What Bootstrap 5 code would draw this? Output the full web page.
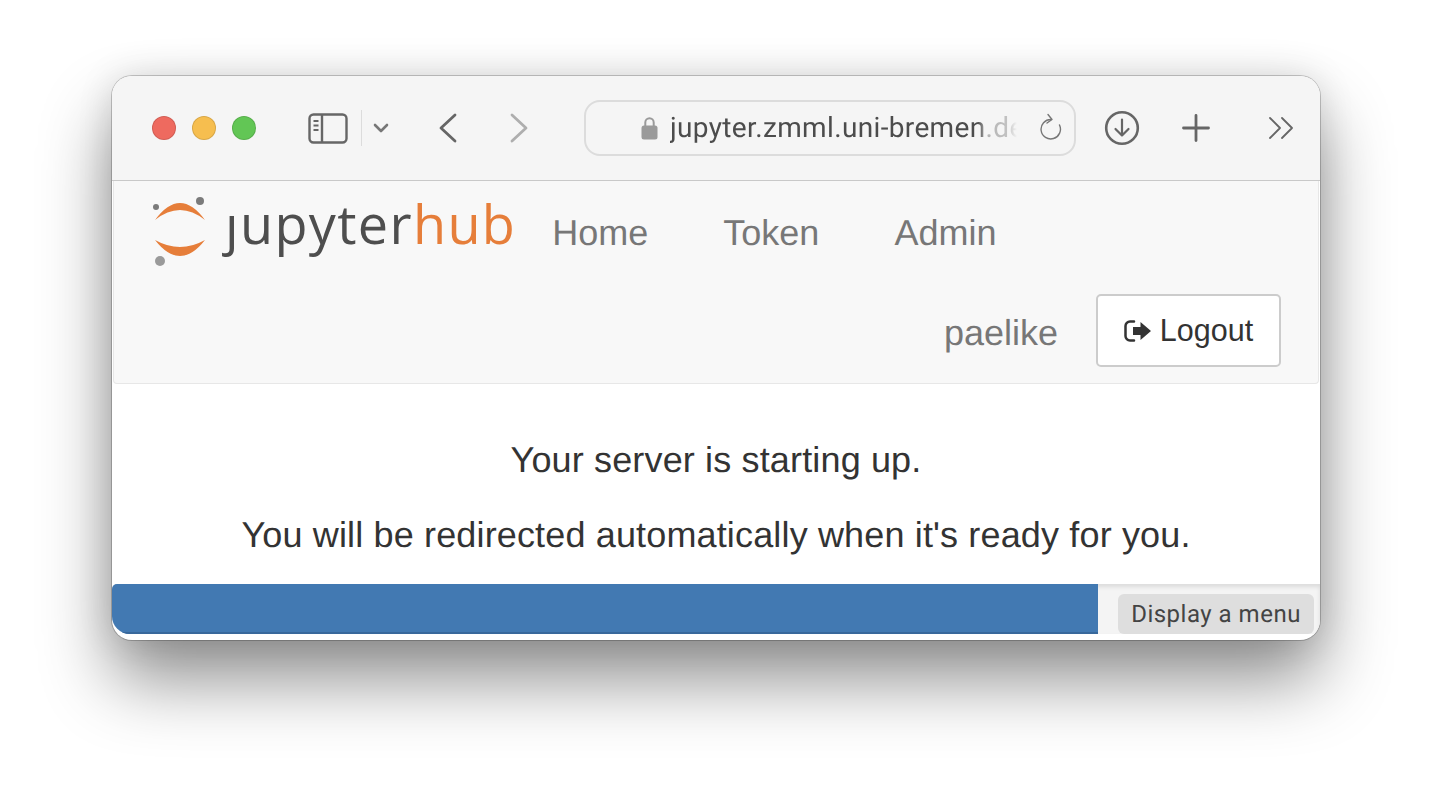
<!DOCTYPE html>
<html lang="en">
<head>
    <meta charset="UTF-8">
    <meta name="viewport" content="width=device-width, initial-scale=1.0">
    <title>JupyterHub</title>
    <link href="https://cdn.jsdelivr.net/npm/bootstrap@5.3.3/dist/css/bootstrap.min.css" rel="stylesheet">
    <style>
        body {
            background: #fff;
            min-height: 788px;
            padding-top: 76px;
            font-family: "Liberation Sans", Arial, sans-serif;
            color: #333;
            text-rendering: geometricPrecision;
        }
        .app-window {
            width: 1208px;
            height: 564px;
            border-radius: 20px;
            background: #fff;
            overflow: hidden;
            box-shadow: 0 0 0 1px rgba(0, 0, 0, .2), 0 40px 70px 0 rgba(0, 0, 0, .44), 0 0 36px 0 rgba(0, 0, 0, .12);
        }
        .win-toolbar {
            height: 105px;
            background: #f5f5f5;
            border-bottom: 1px solid #c9c9c9;
            padding-left: 40px;
        }
        .win-light {
            width: 24px;
            height: 24px;
            border-radius: 50%;
            margin-right: 16px;
            border: 1px solid rgba(0, 0, 0, .12);
        }
        .win-light-red { background: #ee6a5f; }
        .win-light-yellow { background: #f6be4f; }
        .win-light-green { background: #62c655; }
        .tool-sidebar { margin-left: 35.500px; }
        .tool-sep { width: 1px; height: 36px; background: #dcdcdc; margin: 0 11px 0 13.500px; }
        .tool-chevron { margin-right: 50px; }
        .tool-forward { margin-left: 53px; margin-right: 56px; }
        .url-box {
            width: 492px;
            height: 56px;
            border: 2px solid #dcdcdc;
            border-radius: 16px;
            padding-left: 55px;
            padding-right: 12px;
            font-family: Roboto, sans-serif;
            font-size: 28px;
            color: #4c4c4c;
            letter-spacing: .35px;
        }
        .url-text {
            margin-left: 12px;
            white-space: nowrap;
            -webkit-mask-image: linear-gradient(to right, #000 308px, rgba(0, 0, 0, .38) 316px, rgba(0, 0, 0, .3) 338px, transparent 347px);
            mask-image: linear-gradient(to right, #000 308px, rgba(0, 0, 0, .38) 316px, rgba(0, 0, 0, .3) 338px, transparent 347px);
        }
        .tool-download { margin-left: 28px; margin-right: 42px; }
        .tool-more { margin-left: 58px; }
        .hub-navbar.navbar {
            height: 203px;
            padding: 0;
            background: #f8f8f8;
            border: 1px solid #e7e7e7;
            border-top: 0;
            border-radius: 0 0 4px 4px;
            margin: 0 1px;
            align-items: flex-start;
            align-content: flex-start;
            justify-content: flex-start;
        }
        .hub-top {
            height: 113px;
            padding-left: 37px;
            padding-top: 15px;
        }
        .hub-logo { flex-shrink: 0; }
        .hub-wordmark {
            font-family: "Open Sans", sans-serif;
            font-size: 54px;
            line-height: 60px;
            letter-spacing: 1.350px;
            color: #4e4e4e;
            margin-left: 16px;
            margin-top: -3px;
            height: 60px;
        }
        .hub-wordmark-j {
            display: inline-block;
            clip-path: inset(23px -20px -20px -20px);
        }
        .hub-wordmark-accent { color: #e67e3a; }
        .hub-link.nav-link {
            font-size: 36px;
            line-height: 1;
            color: #777;
            padding: 19px 37.500px 0;
        }
        .hub-links { margin-left: -1.500px; }
        .hub-bottom { padding-right: 37px; }
        .hub-user {
            font-size: 36px;
            color: #777;
            margin-right: 38px;
            padding-top: 4px;
        }
        .hub-logout.btn {
            width: 185px;
            height: 73px;
            background: #fff;
            border: 2px solid #ccc;
            border-radius: 5px;
            color: #333;
            font-size: 30.500px;
            padding: 0;
            gap: 9px;
        }
        .hub-main {
            height: 200px;
            font-size: 36px;
            letter-spacing: .15px;
            padding-top: 56px;
        }
        .hub-main p { margin-bottom: 35px; line-height: 40px; }
        .hub-progress.progress {
            height: 50px;
            background: #f4f4f4;
            border-radius: 5px 0 0 18px;
            box-shadow: inset 0 3px 4px rgba(0, 0, 0, .1);
        }
        .hub-progress .progress-bar {
            background: #4279b2;
            border-bottom: 2px solid #38689b;
        }
        .menu-hint {
            right: 6px;
            top: 10px;
            width: 196px;
            height: 40px;
            background: #dedede;
            border-radius: 6px;
            font-family: Roboto, sans-serif;
            font-size: 24px;
            line-height: 40px;
            color: #444;
            text-align: center;
            letter-spacing: .5px;
        }
    </style>
</head>
<body>
    <div class="app-window mx-auto d-flex flex-column">
        <!-- Barra do navegador -->
        <div class="win-toolbar d-flex align-items-center flex-shrink-0">
            <span class="win-light win-light-red"></span>
            <span class="win-light win-light-yellow"></span>
            <span class="win-light win-light-green"></span>
            <svg class="tool-sidebar" width="40" height="31" viewBox="0 0 40 31" fill="none" stroke="#666" stroke-width="2.400">
                <rect x="1.500" y="1.500" width="37" height="28" rx="4"/>
                <path d="M14 2v27"/>
                <path d="M5.500 8h5M5.500 12.500h5M5.500 17h5" stroke-width="1.800"/>
            </svg>
            <span class="tool-sep"></span>
            <svg class="tool-chevron" width="16" height="11" viewBox="0 0 16 11" fill="none" stroke="#777" stroke-width="2.600" stroke-linecap="round" stroke-linejoin="round">
                <path d="M2 2l6 6 6-6"/>
            </svg>
            <svg width="18" height="30" viewBox="0 0 18 30" fill="none" stroke="#666" stroke-width="2.800" stroke-linecap="round" stroke-linejoin="round">
                <path d="M16 2L2 15l14 13"/>
            </svg>
            <svg class="tool-forward" width="18" height="30" viewBox="0 0 18 30" fill="none" stroke="#aeaeae" stroke-width="2.800" stroke-linecap="round" stroke-linejoin="round">
                <path d="M2 2l14 13L2 28"/>
            </svg>
            <div class="url-box d-flex align-items-center flex-shrink-0">
                <svg class="flex-shrink-0" width="17" height="24" viewBox="0 0 17 24" fill="#9a9a9a">
                    <path d="M4.300 10V6.500a4.200 4.200 0 0 1 8.400 0V10" fill="none" stroke="#9a9a9a" stroke-width="2"/>
                    <rect x="0.500" y="9.500" width="16" height="14" rx="2.500"/>
                </svg>
                <span class="url-text">jupyter.zmml.uni-bremen.de/</span>
                <svg class="ms-auto flex-shrink-0" width="24" height="30" viewBox="0 0 24 30" fill="none" stroke="#777" stroke-width="1.400" stroke-linecap="round" stroke-linejoin="round">
                    <path d="M13 6.500A9.700 9.700 0 1 0 21.500 12"/>
                    <path d="M10 1.500l4 5-5 3.500"/>
                </svg>
            </div>
            <svg class="tool-download" width="36" height="36" viewBox="0 0 36 36" fill="none" stroke="#666" stroke-linecap="round" stroke-linejoin="round">
                <circle cx="18" cy="18" r="15.800" stroke-width="2.600"/>
                <path d="M18 9.500v16M11.500 19l6.500 6.500 6.500-6.500" stroke-width="2.200"/>
            </svg>
            <svg width="28" height="28" viewBox="0 0 28 28" fill="none" stroke="#666" stroke-width="2.800" stroke-linecap="round">
                <path d="M14 1.500v25M1.500 14h25"/>
            </svg>
            <svg class="tool-more" width="26" height="24" viewBox="0 0 26 24" fill="none" stroke="#666" stroke-width="1.800" stroke-linecap="round" stroke-linejoin="round">
                <path d="M2 2l10 10L2 22M14 2l10 10-10 10"/>
            </svg>
        </div>

        <!-- Navbar do hub -->
        <nav class="navbar hub-navbar flex-column flex-shrink-0">
            <div class="hub-top d-flex w-100">
                <svg class="hub-logo" width="58" height="72" viewBox="0 0 58 72">
                    <path d="M4 24Q29 -10 54 24Q29 4 4 24Z" fill="#e67e3a"/>
                    <path d="M4 44Q29 76 54 44Q29 58 4 44Z" fill="#e67e3a"/>
                    <circle cx="5" cy="11" r="3" fill="#7b7b7b"/>
                    <circle cx="49" cy="5" r="4" fill="#7b7b7b"/>
                    <circle cx="9" cy="65" r="5" fill="#9a9a9a"/>
                </svg>
                <span class="hub-wordmark flex-shrink-0"><span class="hub-wordmark-j">j</span>upyter<span class="hub-wordmark-accent">hub</span></span>
                <ul class="navbar-nav flex-row hub-links">
                    <li class="nav-item"><a class="nav-link hub-link" href="#">Home</a></li>
                    <li class="nav-item"><a class="nav-link hub-link" href="#">Token</a></li>
                    <li class="nav-item"><a class="nav-link hub-link" href="#">Admin</a></li>
                </ul>
            </div>
            <div class="hub-bottom d-flex justify-content-end align-items-center w-100">
                <span class="hub-user">paelike</span>
                <button class="btn hub-logout d-flex align-items-center justify-content-center" type="button">
                    <svg width="27" height="22" viewBox="0 0 27 22">
                        <path d="M10 1.500H6A4.500 4.500 0 0 0 1.500 6v10A4.500 4.500 0 0 0 6 20.500H10" fill="none" stroke="#333" stroke-width="2.500" stroke-linecap="round"/>
                        <path d="M9 7h7.500V2L27 11 16.500 20v-5H9z" fill="#333"/>
                    </svg>
                    Logout
                </button>
            </div>
        </nav>

        <!-- Mensagem -->
        <main class="hub-main text-center flex-shrink-0">
            <p>Your server is starting up.</p>
            <p>You will be redirected automatically when it's ready for you.</p>
        </main>

        <!-- Barra de progresso -->
        <div class="position-relative flex-shrink-0">
            <div class="progress hub-progress">
                <div class="progress-bar" style="width: 81.62%"></div>
            </div>
            <div class="menu-hint position-absolute">Display a menu</div>
        </div>
    </div>

    <script src="https://cdn.jsdelivr.net/npm/bootstrap@5.3.3/dist/js/bootstrap.bundle.min.js"></script>
</body>
</html>
